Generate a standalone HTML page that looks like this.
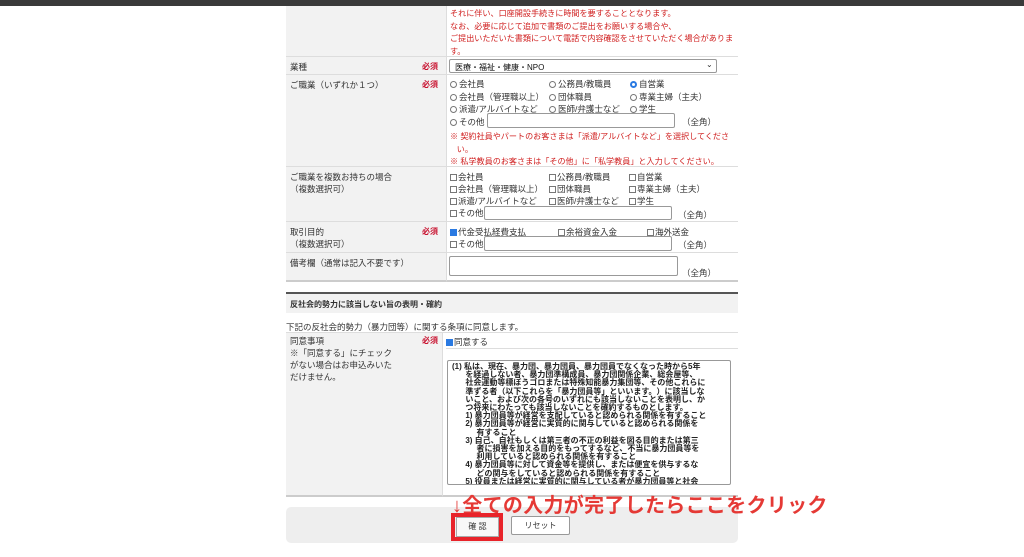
<!DOCTYPE html><html><head><meta charset="utf-8"><style>
*{margin:0;padding:0;box-sizing:border-box}
body{width:1024px;height:557px;background:#fff;font-family:"Liberation Sans","Noto Sans CJK JP",sans-serif;font-size:8.5px;color:#333;position:relative;overflow:hidden}
.a{position:absolute;white-space:nowrap}
.top{left:0;top:0;width:1024px;height:6px;background:#3a3a3a}
.lab{position:absolute;left:286px;width:160px;background:#f2f2f2;border-bottom:1px solid #ddd}
.val{position:absolute;left:446px;width:292px;background:#fff;border-bottom:1px solid #ddd;border-left:1px solid #ddd}
.req{position:absolute;left:422px;color:#c8102e;font-weight:bold;font-size:8px}
.red{color:#d02020}
.inp{position:absolute;border:1px solid #999;background:#fff;border-radius:2px}
.cb{display:inline-block;width:7px;height:7px;border:1px solid #777;vertical-align:-1px;margin-right:1px;background:#fff}
.rd{display:inline-block;width:7px;height:7px;border:1px solid #777;border-radius:50%;vertical-align:-1px;margin-right:2px}
</style></head><body>
<div class="a top"></div>
<div class="lab" style="top:6px;height:51px"></div><div class="val" style="top:6px;height:51px"></div>
<div class="a red" style="left:450px;top:8px;line-height:12.5px;font-size:8.1px">それに伴い、口座開設手続きに時間を要することとなります。<br>なお、必要に応じて追加で書類のご提出をお願いする場合や、<br>ご提出いただいた書類について電話で内容確認をさせていただく場合がありま<br>す。</div>
<div class="lab" style="top:57px;height:18px"></div><div class="val" style="top:57px;height:18px"></div>
<div class="a" style="left:290px;top:61px">業種</div><div class="req a" style="top:61px">必須</div>
<div class="inp" style="left:449px;top:59px;width:268px;height:14px"></div>
<div class="a" style="left:455px;top:62px;font-size:8px;color:#111">医療・福祉・健康・NPO</div><div class="a" style="left:706px;top:60px;font-size:8px">⌄</div>
<div class="lab" style="top:75px;height:92px"></div><div class="val" style="top:75px;height:92px"></div>
<div class="a" style="left:290px;top:79px">ご職業（いずれか１つ）</div><div class="req a" style="top:79px">必須</div>
<div class="a" style="left:450px;top:78px;line-height:12.5px"><span class="rd"></span>会社員<br><span class="rd"></span>会社員（管理職以上）<br><span class="rd"></span>派遣/アルバイトなど<br><span class="rd"></span>その他</div>
<div class="a" style="left:549px;top:78px;line-height:12.5px"><span class="rd"></span>公務員/教職員<br><span class="rd"></span>団体職員<br><span class="rd"></span>医師/弁護士など</div>
<div class="a" style="left:630px;top:78px;line-height:12.5px"><span class="rd" style="border:2.5px solid #2a7ae2"></span>自営業<br><span class="rd"></span>専業主婦（主夫）<br><span class="rd"></span>学生</div>
<div class="inp" style="left:487px;top:113px;width:188px;height:15px"></div><div class="a" style="left:682px;top:116px">（全角）</div>
<div class="a red" style="left:450px;top:131px;line-height:12.5px;font-size:8.1px">※ 契約社員やパートのお客さまは「派遣/アルバイトなど」を選択してくださ<br>&nbsp;&nbsp;&nbsp;い。<br>※ 私学教員のお客さまは「その他」に「私学教員」と入力してください。</div>
<div class="lab" style="top:167px;height:55px"></div><div class="val" style="top:167px;height:55px"></div>
<div class="a" style="left:290px;top:171px;line-height:12px">ご職業を複数お持ちの場合<br>（複数選択可）</div>
<div class="a" style="left:450px;top:171px;line-height:12px"><span class="cb"></span>会社員<br><span class="cb"></span>会社員（管理職以上）<br><span class="cb"></span>派遣/アルバイトなど<br><span class="cb"></span>その他</div>
<div class="a" style="left:549px;top:171px;line-height:12px"><span class="cb"></span>公務員/教職員<br><span class="cb"></span>団体職員<br><span class="cb"></span>医師/弁護士など</div>
<div class="a" style="left:629px;top:171px;line-height:12px"><span class="cb"></span>自営業<br><span class="cb"></span>専業主婦（主夫）<br><span class="cb"></span>学生</div>
<div class="inp" style="left:484px;top:206px;width:188px;height:14px"></div><div class="a" style="left:678px;top:209px">（全角）</div>
<div class="lab" style="top:222px;height:31px"></div><div class="val" style="top:222px;height:31px"></div>
<div class="a" style="left:290px;top:226px;line-height:12px">取引目的<br>（複数選択可）</div><div class="req a" style="top:226px">必須</div>
<div class="a" style="left:450px;top:226px;line-height:12px"><span class="cb" style="background:#2a7ae2;border-color:#2a7ae2"></span>代金受払経費支払<br><span class="cb"></span>その他</div>
<div class="a" style="left:558px;top:226px"><span class="cb"></span>余裕資金入金</div>
<div class="a" style="left:647px;top:226px"><span class="cb"></span>海外送金</div>
<div class="inp" style="left:484px;top:236px;width:188px;height:15px"></div><div class="a" style="left:678px;top:239px">（全角）</div>
<div class="lab" style="top:253px;height:29px;border-bottom:2px solid #ccc"></div><div class="val" style="top:253px;height:29px;border-bottom:2px solid #ccc"></div>
<div class="a" style="left:290px;top:257px">備考欄（通常は記入不要です）</div>
<div class="inp" style="left:449px;top:256px;width:229px;height:20px"></div><div class="a" style="left:682px;top:267px">（全角）</div>
<div class="a" style="left:286px;top:292px;width:452px;height:2px;background:#555"></div>
<div class="a" style="left:286px;top:294px;width:452px;height:19px;background:#f2f2f2"></div>
<div class="a" style="left:290px;top:299px;font-weight:bold;font-size:8px">反社会的勢力に該当しない旨の表明・確約</div>
<div class="a" style="left:286px;top:321px">下記の反社会的勢力（暴力団等）に関する条項に同意します。</div>
<div class="lab" style="top:332px;height:165px;border-top:1px solid #ddd;border-bottom:2px solid #ccc"></div><div class="val" style="left:442px;width:296px;top:332px;height:165px;border-top:1px solid #ddd;border-bottom:2px solid #ccc"></div>
<div class="a" style="left:446px;top:348px;width:292px;height:1px;background:#ddd"></div>
<div class="a" style="left:290px;top:335px;line-height:12px">同意事項<br>※「同意する」にチェック<br>がない場合はお申込みいた<br>だけません。</div><div class="req a" style="top:335px">必須</div>
<div class="a" style="left:446px;top:336px"><span class="cb" style="background:#2a7ae2;border-color:#2a7ae2"></span>同意する</div>
<div class="inp" style="left:447px;top:360px;width:284px;height:125px;overflow:hidden">
<div class="a" style="left:4px;top:2px;font-size:8px;font-weight:bold;color:#222;line-height:8.2px">(1) 私は、現在、暴力団、暴力団員、暴力団員でなくなった時から5年<br>&nbsp;&nbsp;&nbsp;&nbsp;&nbsp;&nbsp;を経過しない者、暴力団準構成員、暴力団関係企業、総会屋等、<br>&nbsp;&nbsp;&nbsp;&nbsp;&nbsp;&nbsp;社会運動等標ぼうゴロまたは特殊知能暴力集団等、その他これらに<br>&nbsp;&nbsp;&nbsp;&nbsp;&nbsp;&nbsp;準ずる者（以下これらを「暴力団員等」といいます。）に該当しな<br>&nbsp;&nbsp;&nbsp;&nbsp;&nbsp;&nbsp;いこと、および次の各号のいずれにも該当しないことを表明し、か<br>&nbsp;&nbsp;&nbsp;&nbsp;&nbsp;&nbsp;つ将来にわたっても該当しないことを確約するものとします。<br>&nbsp;&nbsp;&nbsp;&nbsp;&nbsp;&nbsp;1) 暴力団員等が経営を支配していると認められる関係を有すること<br>&nbsp;&nbsp;&nbsp;&nbsp;&nbsp;&nbsp;2) 暴力団員等が経営に実質的に関与していると認められる関係を<br>&nbsp;&nbsp;&nbsp;&nbsp;&nbsp;&nbsp;&nbsp;&nbsp;&nbsp;&nbsp;&nbsp;有すること<br>&nbsp;&nbsp;&nbsp;&nbsp;&nbsp;&nbsp;3) 自己、自社もしくは第三者の不正の利益を図る目的または第三<br>&nbsp;&nbsp;&nbsp;&nbsp;&nbsp;&nbsp;&nbsp;&nbsp;&nbsp;&nbsp;&nbsp;者に損害を加える目的をもってするなど、不当に暴力団員等を<br>&nbsp;&nbsp;&nbsp;&nbsp;&nbsp;&nbsp;&nbsp;&nbsp;&nbsp;&nbsp;&nbsp;利用していると認められる関係を有すること<br>&nbsp;&nbsp;&nbsp;&nbsp;&nbsp;&nbsp;4) 暴力団員等に対して資金等を提供し、または便宜を供与するな<br>&nbsp;&nbsp;&nbsp;&nbsp;&nbsp;&nbsp;&nbsp;&nbsp;&nbsp;&nbsp;&nbsp;どの関与をしていると認められる関係を有すること<br>&nbsp;&nbsp;&nbsp;&nbsp;&nbsp;&nbsp;5) 役員または経営に実質的に関与している者が暴力団員等と社会</div></div>
<div class="a" style="left:452px;top:489px;font-size:20px;font-weight:bold;color:#e53935;letter-spacing:0.3px">↓全ての入力が完了したらここをクリック</div>
<div class="a" style="left:286px;top:507px;width:452px;height:36px;background:#eee;border-radius:5px;z-index:-1"></div>
<div class="a" style="left:451px;top:513px;width:52px;height:28px;border:4px solid #e8232a"></div>
<div class="a" style="left:456px;top:517px;width:43px;height:20px;background:#f8f8f8;border:1px solid #aaa;text-align:center;line-height:18px;font-size:8px">確 認</div>
<div class="a" style="left:511px;top:516px;width:59px;height:19px;background:#fff;border:1px solid #999;border-radius:2px;text-align:center;line-height:17px;font-size:8px">リセット</div>
</body></html>
